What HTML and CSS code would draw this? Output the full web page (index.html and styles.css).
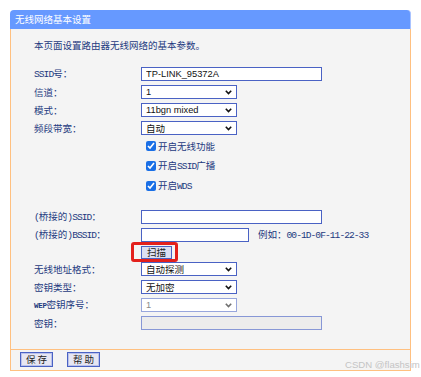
FILE: index.html
```html
<!DOCTYPE html>
<html lang="zh-CN">
<head>
<meta charset="utf-8">
<title>无线网络基本设置</title>
<link rel="stylesheet" href="styles.css">
</head>
<body>
<div class="panel">
  <div class="title">无线网络基本设置</div>
  <div class="content">
    <p class="intro">本页面设置路由器无线网络的基本参数。</p>
    <div class="form">
      <div class="row">
        <span class="label"><span class="m">SSID</span>号：</span>
        <input class="text w-long" type="text" value="TP-LINK_95372A">
      </div>
      <div class="row">
        <span class="label">信道：</span>
        <div class="select"><span>1</span><svg class="chev" width="7" height="5" viewBox="0 0 7 5"><path d="M0.8 0.8 L3.5 3.6 L6.2 0.8" fill="none" stroke="currentColor" stroke-width="1.6"/></svg></div>
      </div>
      <div class="row">
        <span class="label">模式：</span>
        <div class="select"><span>11bgn mixed</span><svg class="chev" width="7" height="5" viewBox="0 0 7 5"><path d="M0.8 0.8 L3.5 3.6 L6.2 0.8" fill="none" stroke="currentColor" stroke-width="1.6"/></svg></div>
      </div>
      <div class="row">
        <span class="label">频段带宽：</span>
        <div class="select"><span class="cjk">自动</span><svg class="chev" width="7" height="5" viewBox="0 0 7 5"><path d="M0.8 0.8 L3.5 3.6 L6.2 0.8" fill="none" stroke="currentColor" stroke-width="1.6"/></svg></div>
      </div>
      <div class="checks">
        <label class="check"><input type="checkbox" checked><span>开启无线功能</span></label>
        <label class="check"><input type="checkbox" checked><span>开启<span class="m">SSID</span>广播</span></label>
        <label class="check"><input type="checkbox" checked><span>开启<span class="m">WDS</span></span></label>
      </div>
      <div class="row bridge">
        <span class="label"><span class="m">(</span>桥接的<span class="m">)SSID</span>：</span>
        <input class="text w-long" type="text" value="">
      </div>
      <div class="row">
        <span class="label"><span class="m">(</span>桥接的<span class="m">)BSSID</span>：</span>
        <div class="inline">
          <input class="text w-mid" type="text" value="">
          <span class="hint">例如：<span class="m">00-1D-0F-11-22-33</span></span>
        </div>
      </div>
      <div class="row scan-row">
        <span class="label"></span>
        <span class="scan-wrap"><button class="scan" type="button">扫描</button></span>
      </div>
      <div class="row">
        <span class="label">无线地址格式：</span>
        <div class="select"><span class="cjk">自动探测</span><svg class="chev" width="7" height="5" viewBox="0 0 7 5"><path d="M0.8 0.8 L3.5 3.6 L6.2 0.8" fill="none" stroke="currentColor" stroke-width="1.6"/></svg></div>
      </div>
      <div class="row">
        <span class="label">密钥类型：</span>
        <div class="select"><span class="cjk">无加密</span><svg class="chev" width="7" height="5" viewBox="0 0 7 5"><path d="M0.8 0.8 L3.5 3.6 L6.2 0.8" fill="none" stroke="currentColor" stroke-width="1.6"/></svg></div>
      </div>
      <div class="row">
        <span class="label"><span class="m wep">WEP</span>密钥序号：</span>
        <div class="select disabled"><span>1</span><svg class="chev" width="7" height="5" viewBox="0 0 7 5"><path d="M0.8 0.8 L3.5 3.6 L6.2 0.8" fill="none" stroke="currentColor" stroke-width="1.6"/></svg></div>
      </div>
      <div class="row">
        <span class="label">密钥：</span>
        <input class="text w-long disabled" type="text" value="" disabled>
      </div>
    </div>
  </div>
  <div class="footer">
    <button class="btn" type="button">保 存</button>
    <button class="btn" type="button">帮 助</button>
  </div>
</div>
<div class="watermark">CSDN @flashsim</div>
</body>
</html>
```
FILE: styles.css
```css
html, body {
  margin: 0;
  padding: 0;
  background: #ffffff;
}
body {
  position: relative;
  width: 421px;
  height: 377px;
  overflow: hidden;
  font-family: "Noto Sans CJK SC", "Liberation Sans", sans-serif;
  font-size: 9.5px;
  line-height: 14px;
  color: #1d3a80;
}
.panel {
  margin: 10px 0 0 10px;
  width: 401px;
}
.title {
  height: 19px;
  line-height: 19px;
  background: #6699ff;
  color: #ffffff;
  padding-left: 5px;
  border-radius: 4px 4px 0 0;
  border-right: 1px solid #a9c3ff;
}
.content {
  background: #f4f4f4;
  border-left: 1px solid #ffc080;
  border-right: 1px solid #ffc080;
  padding: 9px 0 17px 23px;
}
.intro {
  margin: 0;
  line-height: 14px;
}
.form {
  margin-top: 13px;
  display: flex;
  flex-direction: column;
}
.row {
  display: grid;
  grid-template-columns: 107px auto;
  justify-items: start;
  align-items: center;
  height: 18px;
}
.label {
  white-space: nowrap;
}
.m {
  font-family: "Liberation Mono", monospace;
  font-size: 9.6px;
  letter-spacing: -0.95px;
}
.wep {
  font-weight: bold;
  font-size: 7.5px;
  letter-spacing: -0.3px;
}
.text {
  box-sizing: border-box;
  height: 14px;
  margin: 0;
  padding: 0 4px;
  border: 1px solid #4a62c4;
  background: #ffffff;
  font-family: "Liberation Sans", sans-serif;
  font-size: 9.3px;
  color: #111111;
  outline: none;
}
.w-long { width: 181px; }
.w-mid { width: 108px; }
.text.disabled {
  background: #ececec;
  border-color: #8797d6;
}
.select {
  box-sizing: border-box;
  width: 96px;
  height: 14px;
  border: 1px solid #4a62c4;
  background: #ffffff;
  display: flex;
  align-items: center;
  justify-content: space-between;
  padding: 0 4px 0 4px;
  font-family: "Liberation Sans", sans-serif;
  font-size: 9.3px;
  color: #111111;
}
.select .cjk {
  font-family: "Noto Sans CJK SC", sans-serif;
  font-size: 9.5px;
}
.chev {
  color: #111111;
  display: block;
}
.select.disabled {
  border-color: #98a6dc;
  color: #8a8a8a;
}
.select.disabled .chev {
  color: #6f6f6f;
}
.checks {
  margin-top: -1px;
  display: flex;
  flex-direction: column;
  padding-left: 112px;
}
.check {
  height: 20px;
  display: flex;
  align-items: center;
  gap: 2px;
}
.check input {
  width: 10px;
  height: 10px;
  margin: 0;
  accent-color: #1a6fe6;
}
.bridge {
  margin-top: 12px;
}
.inline {
  display: flex;
  align-items: center;
  gap: 9px;
}
.hint {
  white-space: nowrap;
}
.scan-row {
  height: 16px;
  align-items: start;
}
.scan-wrap {
  position: relative;
  display: block;
  margin-top: 2px;
}
.scan-wrap::after {
  content: "";
  position: absolute;
  top: -4px;
  right: -6px;
  bottom: -3px;
  left: -10px;
  border: 3px solid #e3201c;
  border-radius: 3px;
}
.scan {
  box-sizing: border-box;
  display: block;
  width: 31px;
  height: 13px;
  margin: 0;
  padding: 0;
  border: 1px solid #4a62c4;
  background: #dcdff2;
  font-family: "Noto Sans CJK SC", sans-serif;
  font-size: 9.5px;
  line-height: 11px;
  color: #222222;
}
.footer {
  box-sizing: border-box;
  height: 22px;
  background: #f4f4f4;
  border: 1px solid #ffc080;
  display: flex;
  align-items: flex-start;
  gap: 14px;
  padding: 2px 0 0 9px;
}
.btn {
  box-sizing: border-box;
  width: 33px;
  height: 15px;
  margin: 0;
  padding: 0;
  border: 1px solid #4a62c4;
  box-shadow: inset 0 0 0 1px #b9c2ec;
  background: #e6e6f2;
  font-family: "Noto Sans CJK SC", sans-serif;
  font-size: 9.5px;
  line-height: 13px;
  color: #222222;
}
.watermark {
  position: absolute;
  left: 345px;
  top: 359px;
  font-family: "Liberation Sans", sans-serif;
  font-size: 9.6px;
  line-height: 12px;
  color: #c4c4c4;
  white-space: nowrap;
}
```
